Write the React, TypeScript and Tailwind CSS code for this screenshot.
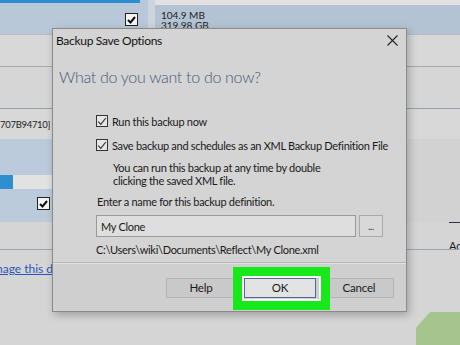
import React from "react";

const font = { fontFamily: 'Lato, "Noto Sans", sans-serif' };

function Check({ className = "" }: { className?: string }) {
  return (
    <div className={`flex h-[13px] w-[13px] items-center justify-center border border-[#222] bg-[#f4f4f4] ${className}`}>
      <svg width="9" height="8" viewBox="0 0 9 8">
        <path d="M1 4 L3.5 6.5 L8 1" stroke="#111" strokeWidth="2" fill="none" />
      </svg>
    </div>
  );
}

function DlgCheck() {
  return (
    <div className="flex h-[12px] w-[12px] shrink-0 items-center justify-center border border-[#333] bg-[#e6e6e6]">
      <svg width="10" height="9" viewBox="0 0 10 9">
        <path d="M1.2 4.6 L3.8 7.3 L8.8 1" stroke="#333" strokeWidth="1.2" fill="none" />
      </svg>
    </div>
  );
}

export default function App() {
  return (
    <div className="relative h-[345px] w-[460px] overflow-hidden bg-[#d5d5d5] text-[#1a1a1a]" style={font}>
      {/* background application */}
      <div className="flex h-full w-full flex-col">
        <div className="flex h-[34px]">
          <div className="flex w-[148px] flex-col bg-[#b9c8d8]">
            <div className="h-[3px] w-[140px] bg-[#2b8ed2]" />
            <div className="flex flex-1 justify-end pr-[10px] pt-[10px]">
              <Check />
            </div>
          </div>
          <div className="w-[7px] bg-[#cdd5dc]" />
          <div className="flex flex-1 flex-col">
            <div className="h-[5px] bg-[#e4e0e2]" />
            <div className="flex-1 bg-[#b4c3d3] pl-[6px] pt-[5px] text-[10px] leading-[10px] text-[#222]">
              <div>104.9 MB</div>
              <div>319.98 GB</div>
            </div>
          </div>
        </div>
        <div className="h-[1px] bg-[#b8bcc0]" />
        <div className="h-[31px] bg-[#d8d8d8]" />
        <div className="h-[1px] bg-[#a9a9a9]" />
        <div className="h-[41px] bg-[#d6d6d6]" />
        <div className="h-[1px] bg-[#8fa4aa]" />
        <div className="flex h-[30px] items-center bg-[#d8d8d8] pt-[2px] text-[9.5px] tracking-[-0.3px] text-[#222]">
          <span>707B94710] -</span>
        </div>
        <div className="flex h-[83px]">
          <div className="flex w-[52px] flex-col bg-[#bccbdb]">
            <div className="mt-[36px] flex h-[14px]">
              <div className="w-[13px] bg-[#2e8fd0]" />
              <div className="flex-1 bg-[#e2e2e2]" />
            </div>
            <div className="mt-[8px] flex justify-end pr-[2px]">
              <Check />
            </div>
          </div>
          <div className="flex-1" />
          <div className="flex w-[42px] flex-col bg-[#bccbdb]">
            <div className="mt-[36px] h-[14px] w-[32px] bg-[#2e8fd0]" />
            <div className="mt-[8px] flex pl-[17px]">
              <Check />
            </div>
          </div>
          <div className="w-[2px] bg-[#d8d8d8]" />
          <div className="flex flex-1 flex-col bg-[#d2d2d2] pl-[3px] pt-[10px]">
            <div className="h-[14px] w-full border-l border-[#aaa]" />
          </div>
        </div>
        <div className="flex h-[27px]">
          <div className="flex-1" />
          <div className="w-[11px] overflow-hidden whitespace-nowrap border-t border-[#334] pt-[17px] text-[11px] leading-none">Ac</div>
        </div>
        <div className="h-[1px] bg-[#9aa6b4]" />
        <div className="flex h-[28px] items-end">
          <span className="ml-[-4px] text-[12px] text-[#2a56b8] underline">nage this d</span>
        </div>
        <div className="relative flex-1">
          <div
            className="absolute bottom-0 right-0 h-[33px] w-[44px] bg-[#a6c58c]"
            style={{ clipPath: "polygon(32% 0, 100% 0, 100% 100%, 0 100%, 0 48%)" }}
          />
        </div>
      </div>

      {/* dialog window */}
      <div className="absolute left-[52px] top-[28px] flex h-[284px] w-[355px] flex-col border border-[#8a8a8a] bg-[#d4d4d4] shadow-[2px_3px_8px_rgba(0,0,0,0.25)]">
        <div className="flex h-[23px] items-center justify-between pl-[3px] pr-[8px]">
          <span className="text-[12px] tracking-[-0.3px] text-[#111]">Backup Save Options</span>
          <svg width="11" height="11" viewBox="0 0 11 11">
            <path d="M0.5 0.5 L10.5 10.5 M10.5 0.5 L0.5 10.5" stroke="#222" strokeWidth="1.1" />
          </svg>
        </div>
        <div className="flex flex-1 flex-col pl-[6px]">
          <div className="mt-[17px] text-[16px] font-light leading-none tracking-[-0.3px] text-[#4a5878]">What do you want to do now?</div>
          <div className="ml-[37px] mt-[30px] flex flex-col text-[11px] leading-none tracking-[-0.3px]">
            <div className="flex items-center gap-[4px]">
              <DlgCheck />
              <span>Run this backup now</span>
            </div>
            <div className="mt-[12px] flex items-center gap-[4px] whitespace-nowrap">
              <DlgCheck />
              <span>Save backup and schedules as an XML Backup Definition File</span>
            </div>
            <div className="ml-[17px] mt-[10px] leading-[13px]">
              <div>You can run this backup at any time by double</div>
              <div>clicking the saved XML file.</div>
            </div>
            <div className="ml-[1px] mt-[9px]">Enter a name for this backup definition.</div>
            <div className="mt-[8px] flex h-[22px]">
              <div className="flex w-[260px] items-center border border-[#9a9a9a] bg-[#dedede] pl-[4px]">My Clone</div>
              <div className="ml-[3px] flex w-[24px] items-end justify-center border border-[#aaa] bg-[#d8d8d8] pb-[5px] text-[9px]">...</div>
            </div>
            <div className="mt-[7px]">C:\Users\wiki\Documents\Reflect\My Clone.xml</div>
          </div>
        </div>
        <div className="h-[2px] border-t border-[#b8b8b8] bg-[#e2e2e2]" />
        <div className="relative flex h-[47px] items-start justify-end gap-[8px] bg-[#cfcfcf] pr-[12px] pt-[14px] text-[11.5px] tracking-[-0.2px]">
          <div className="flex h-[20px] w-[70px] items-center justify-center border border-[#b5b5b5] bg-[#c9c9c9]">Help</div>
          <div className="relative flex h-[20px] w-[72px] items-center justify-center border border-[#4a6a9a] bg-[#e3e3e3]">
            OK
            <div className="absolute left-[-12px] top-[-12px] h-[43px] w-[97px] border-[9px] border-[#17e81a] shadow-[inset_0_0_0_2px_#ffffff]" />
          </div>
          <div className="flex h-[20px] w-[70px] items-center justify-center border border-[#b5b5b5] bg-[#c9c9c9]">Cancel</div>
        </div>
      </div>
    </div>
  );
}
